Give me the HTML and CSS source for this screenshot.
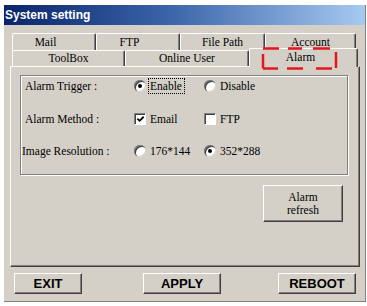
FILE: index.html
```html
<!DOCTYPE html>
<html>
<head>
<meta charset="utf-8">
<link rel="stylesheet" href="styles.css">
</head>
<body>
<div class="window">
  <div class="titlebar">System setting</div>
  <div class="content">
    <div class="tabrow row1">
      <div class="tab t-mail">Mail</div>
      <div class="tab t-ftp">FTP</div>
      <div class="tab t-path">File Path</div>
      <div class="tab t-account">Account</div>
    </div>
    <div class="tabrow row2">
      <div class="tab t-toolbox">ToolBox</div>
      <div class="tab t-online">Online User</div>
      <div class="tab t-alarm active">Alarm</div>
    </div>
    <div class="panel">
      <div class="group">
        <div class="row">
          <span class="label">Alarm Trigger :</span>
          <span class="opt c1"><span class="radio on"></span><span class="focus">Enable</span></span>
          <span class="opt"><span class="radio"></span>Disable</span>
        </div>
        <div class="row">
          <span class="label">Alarm Method :</span>
          <span class="opt c1"><span class="check on"><svg viewBox="0 0 10 10" width="10" height="10"><path d="M1.5 4.5 L4 7 L8.5 2.5" fill="none" stroke="#000" stroke-width="2"/></svg></span>Email</span>
          <span class="opt"><span class="check"></span>FTP</span>
        </div>
        <div class="row">
          <span class="label wide">Image Resolution :</span>
          <span class="opt c1"><span class="radio"></span>176*144</span>
          <span class="opt"><span class="radio on"></span>352*288</span>
        </div>
      </div>
      <div class="refresh-wrap">
        <button class="btn refresh">Alarm<br>refresh</button>
      </div>
    </div>
    <div class="actions">
      <button class="btn action b-exit">EXIT</button>
      <button class="btn action b-apply">APPLY</button>
      <button class="btn action b-reboot">REBOOT</button>
    </div>
  </div>
</div>
<svg class="annot" width="367" height="306" viewBox="0 0 367 306">
  <g stroke="#e5171d" stroke-width="2.5" fill="none">
    <path d="M263 48.5 H279 M288 48.5 H302 M313 48.5 H330"/>
    <path d="M263 54 V68.5"/>
    <path d="M263 68.5 H278 M287 68.5 H303 M316 68.5 H332"/>
    <path d="M336 52 V68"/>
  </g>
</svg>
</body>
</html>
```

FILE: styles.css
```css
html, body {
  margin: 0;
  padding: 0;
  background: #fff;
}
body {
  width: 367px;
  height: 306px;
  overflow: hidden;
  position: relative;
  font-family: "Liberation Serif", "Times New Roman", serif;
  font-size: 11.5px;
  color: #000;
}
.window {
  margin: 5px 0 0 4px;
  width: 362px;
  height: 297px;
  box-sizing: border-box;
  background: #d4d0c8;
  border-right: 1px solid #808080;
  border-bottom: 1px solid #808080;
}
.titlebar {
  height: 20px;
  line-height: 21px;
  padding-left: 1px;
  background: linear-gradient(to right, #0a246a 0%, #3a63a8 45%, #a6caf0 100%);
  color: #fff;
  font-family: "Liberation Sans", Arial, sans-serif;
  font-weight: bold;
  font-size: 12px;
}
.content {
  padding: 8px 5px 0 6px;
}
.tabrow {
  display: flex;
  margin-left: 2px;
}
.row1 {
  height: 17px;
}
.row2 {
  height: 16px;
  align-items: flex-end;
}
.tab {
  box-sizing: border-box;
  height: 100%;
  border-top: 1px solid #fff;
  border-left: 1px solid #fff;
  border-right: 1px solid #404040;
  box-shadow: inset -1px 0 0 #808080;
  border-radius: 2px 2px 0 0;
  text-align: center;
  line-height: 16px;
  background: #d4d0c8;
}
.row2 .tab {
  line-height: 15px;
}
.t-mail { width: 84px; padding-right: 17px; }
.t-ftp { width: 84px; padding-right: 17px; }
.t-path { width: 85px; }
.t-account { width: 91px; }
.t-toolbox { width: 113px; }
.t-online { width: 124px; }
.row2 .active {
  width: 109px;
  height: 19px;
  margin-bottom: -1px;
  position: relative;
  z-index: 1;
  line-height: 17px;
  padding-right: 6px;
}
.panel {
  box-sizing: border-box;
  height: 201px;
  width: 350px;
  border-top: 1px solid #fff;
  border-left: 1px solid #fff;
  border-right: 1px solid #404040;
  border-bottom: 1px solid #404040;
  box-shadow: inset -1px -1px 0 #808080;
  padding: 8px 11px 0 9px;
}
.group {
  box-sizing: border-box;
  height: 100px;
  border: 1px solid #808080;
  box-shadow: 1px 1px 0 #fff, inset 1px 1px 0 #fff;
  padding: 2px 0 0 4px;
  display: flex;
  flex-direction: column;
  gap: 16.5px;
}
.row {
  display: flex;
  align-items: center;
  height: 16px;
}
.label {
  width: 109px;
  flex: none;
}
.label.wide {
  margin-left: -3px;
  width: 112px;
}
.opt {
  display: flex;
  align-items: center;
}
.opt.c1 {
  width: 70px;
}
.radio {
  width: 12px;
  height: 12px;
  border-radius: 50%;
  background: #fff;
  box-shadow: inset 1px 1px 0 #808080, inset 2px 2px 0 #404040, inset -1px -1px 0 #d4d0c8;
  margin-right: 4px;
  display: flex;
  align-items: center;
  justify-content: center;
  flex: none;
}
.radio.on::after {
  content: "";
  width: 4px;
  height: 4px;
  border-radius: 50%;
  background: #000;
}
.check {
  box-sizing: border-box;
  width: 12px;
  height: 12px;
  background: #fff;
  border: 1px solid;
  border-color: #808080 #fff #fff #808080;
  box-shadow: inset 1px 1px 0 #404040;
  margin-right: 4px;
  display: flex;
  align-items: center;
  justify-content: center;
  flex: none;
}
.check svg {
  display: block;
  margin: 1px 0 0 1px;
}
.focus {
  outline: 1px dotted #000;
  outline-offset: 1px;
  padding: 0 1px 0 0;
}
.refresh-wrap {
  display: flex;
  justify-content: flex-end;
  margin-top: 10px;
  margin-right: 5px;
}
.btn {
  box-sizing: border-box;
  background: #d4d0c8;
  border: 1px solid;
  border-color: #fff #404040 #404040 #fff;
  box-shadow: inset -1px -1px 0 #808080;
  padding: 0;
  margin: 0;
  color: #000;
  border-radius: 0;
}
.refresh {
  width: 80px;
  height: 37px;
  font-family: "Liberation Serif", "Times New Roman", serif;
  font-size: 11.5px;
  line-height: 13px;
}
.actions {
  display: flex;
  margin: 6px 4px 0 4px;
}
.action {
  height: 21px;
  font-family: "Liberation Sans", Arial, sans-serif;
  font-weight: bold;
  font-size: 13px;
  line-height: 19px;
}
.b-exit { width: 68px; }
.b-apply { width: 78px; margin-left: 61px; }
.b-reboot { width: 78px; margin-left: auto; }
.annot {
  position: absolute;
  left: 0;
  top: 0;
  z-index: 5;
  pointer-events: none;
}
```
